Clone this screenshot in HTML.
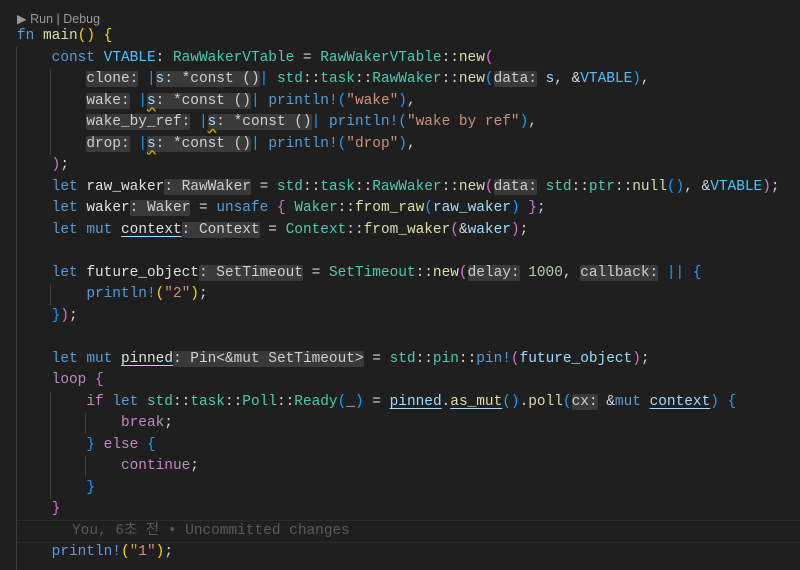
<!DOCTYPE html>
<html><head><meta charset="utf-8"><style>
body{margin:0;background:#1f1f1f;width:800px;height:570px;overflow:hidden;position:relative}
.c{position:absolute;left:17px;top:26px;margin:0;font-family:"Liberation Mono",monospace;font-size:14.45px;line-height:21.5px;color:#d4d4d4;white-space:pre}
.lens{position:absolute;left:17px;top:11px;font-family:"Liberation Sans",sans-serif;font-size:12.5px;color:#999}
.k{color:#569cd6}.p{color:#c586c0}.t{color:#4ec9b0}.f{color:#dcdcaa}.s{color:#ce9178}.v{color:#9cdcfe}.n{color:#b5cea8}.C{color:#4fc1ff}.w{color:#e0e0e0}
.g{color:#ffd700}.m{color:#da70d6}.b{color:#179fff}
.h{background:#3a3a3a;color:#cfcfcf;border-radius:2px}
.u{text-decoration:underline;text-decoration-color:#9cdcfe;text-underline-offset:3px}
.sq{text-decoration:underline wavy #cca700;text-underline-offset:3px}
.gd{position:absolute;width:1px;background:#404040}
.blame{position:absolute;left:17px;right:0;top:520px;height:21px;border-top:1px solid #2c2c2c;border-bottom:1px solid #2c2c2c}
.bt{position:absolute;left:72px;top:521px;font-family:"Liberation Mono","Noto Sans CJK KR",monospace;font-size:14.45px;line-height:21px;color:#5a5a5a;white-space:pre}
</style></head><body>
<div class="gd" style="left:16px;top:47px;height:523px"></div>
<div class="gd" style="left:50px;top:69px;height:86px"></div>
<div class="gd" style="left:50px;top:284px;height:21px"></div>
<div class="gd" style="left:50px;top:392px;height:107px"></div>
<div class="gd" style="left:85px;top:413px;height:21px"></div>
<div class="gd" style="left:85px;top:456px;height:21px"></div>
<div class="blame"></div>
<div class="lens">▶ Run | Debug</div>
<pre class="c"><span class="k">fn</span> <span class="f">main</span><span class="g">()</span> <span class="g">{</span>
    <span class="k">const</span> <span class="C">VTABLE</span>: <span class="t">RawWakerVTable</span> = <span class="t">RawWakerVTable</span>::<span class="f">new</span><span class="m">(</span>
        <span class="h">clone:</span> <span class="b">|</span><span class="h"><span class="v">s</span>: *const ()</span><span class="b">|</span> <span class="t">std</span>::<span class="t">task</span>::<span class="t">RawWaker</span>::<span class="f">new</span><span class="b">(</span><span class="h">data:</span> <span class="v">s</span>, &amp;<span class="C">VTABLE</span><span class="b">)</span>,
        <span class="h">wake:</span> <span class="b">|</span><span class="h"><span class="v sq">s</span>: *const ()</span><span class="b">|</span> <span class="k">println!</span><span class="b">(</span><span class="s">"wake"</span><span class="b">)</span>,
        <span class="h">wake_by_ref:</span> <span class="b">|</span><span class="h"><span class="v sq">s</span>: *const ()</span><span class="b">|</span> <span class="k">println!</span><span class="b">(</span><span class="s">"wake by ref"</span><span class="b">)</span>,
        <span class="h">drop:</span> <span class="b">|</span><span class="h"><span class="v sq">s</span>: *const ()</span><span class="b">|</span> <span class="k">println!</span><span class="b">(</span><span class="s">"drop"</span><span class="b">)</span>,
    <span class="m">)</span>;
    <span class="k">let</span> <span class="w">raw_waker</span><span class="h">: RawWaker</span> = <span class="t">std</span>::<span class="t">task</span>::<span class="t">RawWaker</span>::<span class="f">new</span><span class="m">(</span><span class="h">data:</span> <span class="t">std</span>::<span class="t">ptr</span>::<span class="f">null</span><span class="b">()</span>, &amp;<span class="C">VTABLE</span><span class="m">)</span>;
    <span class="k">let</span> <span class="w">waker</span><span class="h">: Waker</span> = <span class="k">unsafe</span> <span class="m">{</span> <span class="t">Waker</span>::<span class="f">from_raw</span><span class="b">(</span><span class="v">raw_waker</span><span class="b">)</span> <span class="m">}</span>;
    <span class="k">let</span> <span class="k">mut</span> <span class="w u">context</span><span class="h">: Context</span> = <span class="t">Context</span>::<span class="f">from_waker</span><span class="m">(</span>&amp;<span class="v">waker</span><span class="m">)</span>;

    <span class="k">let</span> <span class="w">future_object</span><span class="h">: SetTimeout</span> = <span class="t">SetTimeout</span>::<span class="f">new</span><span class="m">(</span><span class="h">delay:</span> <span class="n">1000</span>, <span class="h">callback:</span> <span class="b">||</span> <span class="b">{</span>
        <span class="k">println!</span><span class="g">(</span><span class="s">"2"</span><span class="g">)</span>;
    <span class="b">}</span><span class="m">)</span>;

    <span class="k">let</span> <span class="k">mut</span> <span class="w u">pinned</span><span class="h">: Pin&lt;&amp;mut SetTimeout&gt;</span> = <span class="t">std</span>::<span class="t">pin</span>::<span class="k">pin!</span><span class="m">(</span><span class="v">future_object</span><span class="m">)</span>;
    <span class="p">loop</span> <span class="m">{</span>
        <span class="p">if</span> <span class="k">let</span> <span class="t">std</span>::<span class="t">task</span>::<span class="t">Poll</span>::<span class="t">Ready</span><span class="b">(</span>_<span class="b">)</span> = <span class="v u">pinned</span>.<span class="f u">as_mut</span><span class="b">()</span>.<span class="f">poll</span><span class="b">(</span><span class="h">cx:</span> &amp;<span class="k">mut</span> <span class="v u">context</span><span class="b">)</span> <span class="b">{</span>
            <span class="p">break</span>;
        <span class="b">}</span> <span class="p">else</span> <span class="b">{</span>
            <span class="p">continue</span>;
        <span class="b">}</span>
    <span class="m">}</span>

    <span class="k">println!</span><span class="g">(</span><span class="s">"1"</span><span class="g">)</span>;</pre>
<div class="bt">You, 6초 전 • Uncommitted changes</div>
</body></html>
